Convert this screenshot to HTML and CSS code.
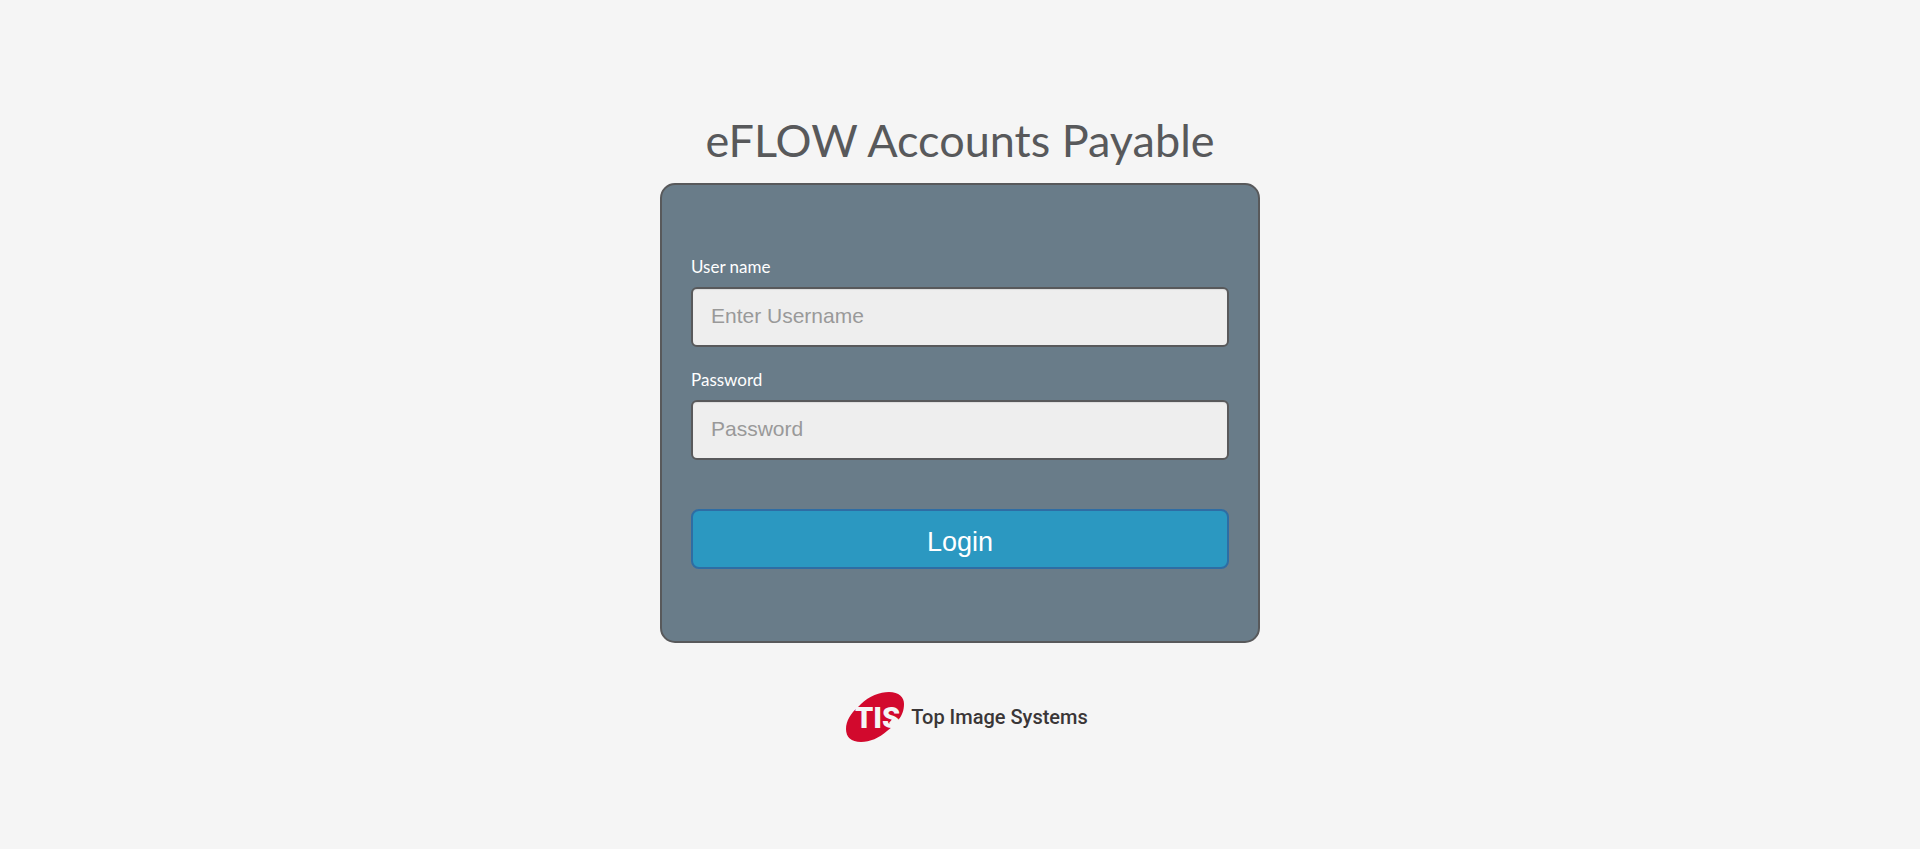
FILE: index.html
```html
<!DOCTYPE html>
<html lang="en">
<head>
<meta charset="utf-8">
<title>eFLOW Accounts Payable</title>
<link rel="stylesheet" href="styles.css">
</head>
<body>
<main class="login">
  <h1 class="title">eFLOW Accounts Payable</h1>
  <form class="card">
    <label class="label" for="username">User name</label>
    <input class="field" id="username" type="text" placeholder="Enter Username">
    <label class="label" for="password">Password</label>
    <input class="field" id="password" type="password" placeholder="Password">
    <button class="submit" type="submit">Login</button>
  </form>
  <footer class="brand">
    <svg class="mark" viewBox="0 0 58 50" role="img" aria-label="TIS">
      <path class="mark-shape" d="M15 12C23 4 34 0 43 0C53 0 58 5 58 12C58 18 56 24 52 28L48 25L43 31L46 35L41 39C33 46 24 50 15 50C5 50 0 45 0 37C0 29 5 21 12 15Z"/>
      <text class="mark-text" x="9" y="36">TIS</text>
    </svg>
    <span class="brand-name">Top Image Systems</span>
  </footer>
</main>
</body>
</html>
```
FILE: styles.css
```css
* { box-sizing: border-box; }
body {
  margin: 0;
  background: #f5f5f5;
  font-family: Lato, sans-serif;
  color: #58595b;
}
.login {
  max-width: 600px;
  margin: 0 auto;
  padding-top: 111px;
}
.title {
  margin: 0 0 14px;
  font-size: 45px;
  line-height: 58px;
  font-weight: 400;
  text-align: center;
}
.card {
  display: flex;
  flex-direction: column;
  padding: 72px 29px;
  background: #697c89;
  border: 2px solid #58595b;
  border-radius: 15px;
}
.label {
  margin-bottom: 11px;
  font-size: 17px;
  line-height: 19px;
  font-weight: 400;
  color: #fff;
}
.field {
  height: 60px;
  margin-bottom: 23px;
  padding: 0 18px 2px;
  border: 2px solid #58595b;
  border-radius: 6px;
  background: #eee;
  box-shadow: inset 0 1px 1px rgba(0, 0, 0, .075);
  font: 21px "Liberation Sans", Arial, sans-serif;
  color: #555;
}
.field::placeholder { color: #999; opacity: 1; }
.submit {
  height: 60px;
  margin-top: 26px;
  padding: 6px 12px 0;
  border: 2px solid #2e6da4;
  border-radius: 8px;
  background: #2b98c1;
  color: #fff;
  font: 27px "Liberation Sans", Arial, sans-serif;
}
.brand {
  display: flex;
  align-items: center;
  justify-content: center;
  gap: 7px;
  padding: 49px 0 0 14px;
}
.mark { width: 58px; height: 50px; }
.mark-shape { fill: #d2092d; }
.mark-text {
  fill: #f5f5f5;
  font: 900 29px Roboto, sans-serif;
}
.brand-name {
  font: 500 20px Roboto, sans-serif;
  color: #3a3637;
}
```
